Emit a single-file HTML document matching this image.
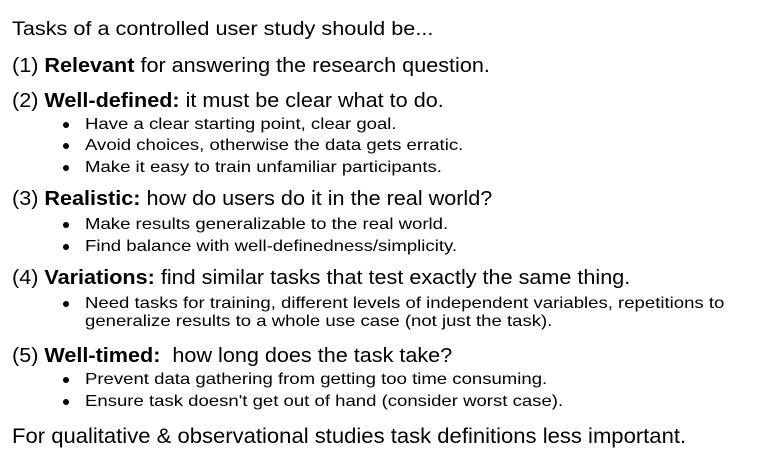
<!DOCTYPE html>
<html><head><meta charset="utf-8"><style>
html,body{margin:0;padding:0;background:#fff;}
body{width:762px;height:470px;position:relative;overflow:hidden;font-family:"Liberation Sans",sans-serif;color:#000;}
.l{position:absolute;white-space:nowrap;transform-origin:0 50%;transform:scaleX(1.08);line-height:1;}
.h{left:12px;font-size:20px;}
.b{left:85px;font-size:16px;transform:scaleX(1.16);}
.d{position:absolute;left:63px;width:6px;height:6px;border-radius:50%;background:#000;}
</style></head><body>
<div class="l h" style="top:20px;font-size:19px;transform:scaleX(1.14)">Tasks of a controlled user study should be...</div>
<div class="l h" style="top:56px">(1) <b>Relevant</b> for answering the research question.</div>
<div class="l h" style="top:91px">(2) <b>Well-defined:</b> it must be clear what to do.</div>
<div class="d" style="top:122px"></div><div class="l b" style="top:117px">Have a clear starting point, clear goal.</div>
<div class="d" style="top:143px"></div><div class="l b" style="top:138px">Avoid choices, otherwise the data gets erratic.</div>
<div class="d" style="top:165px"></div><div class="l b" style="top:160px">Make it easy to train unfamiliar participants.</div>
<div class="l h" style="top:189px">(3) <b>Realistic:</b> how do users do it in the real world?</div>
<div class="d" style="top:222px"></div><div class="l b" style="top:217px">Make results generalizable to the real world.</div>
<div class="d" style="top:244px"></div><div class="l b" style="top:239px">Find balance with well-definedness/simplicity.</div>
<div class="l h" style="top:268px">(4) <b>Variations:</b> find similar tasks that test exactly the same thing.</div>
<div class="d" style="top:301px"></div><div class="l b" style="top:296px">Need tasks for training, different levels of independent variables, repetitions to</div>
<div class="l b" style="top:314px">generalize results to a whole use case (not just the task).</div>
<div class="l h" style="top:346px">(5) <b>Well-timed:</b>&nbsp; how long does the task take?</div>
<div class="d" style="top:377px"></div><div class="l b" style="top:372px">Prevent data gathering from getting too time consuming.</div>
<div class="d" style="top:399px"></div><div class="l b" style="top:394px">Ensure task doesn't get out of hand (consider worst case).</div>
<div class="l h" style="top:426px;font-size:21px;transform:scaleX(1.05)">For qualitative &amp; observational studies task definitions less important.</div>
</body></html>
